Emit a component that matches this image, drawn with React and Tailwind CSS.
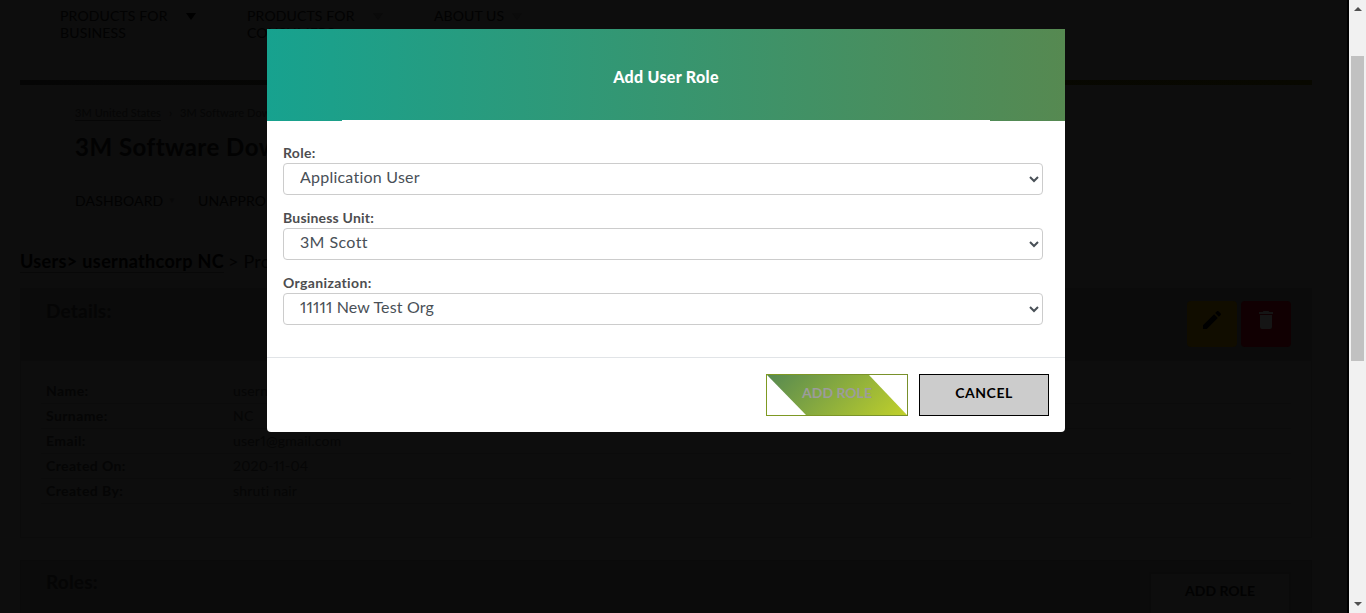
import React from 'react';

const details = [
  ['Name:', 'usernathcorp'],
  ['Surname:', 'NC'],
  ['Email:', 'user1@gmail.com'],
  ['Created On:', '2020-11-04'],
  ['Created By:', 'shruti nair'],
];

function NavItem({ children, className, arrow }) {
  return (
    <div className={`flex shrink-0 items-start ${className}`}>
      <span className="w-[122px] text-[14px] leading-[17px] tracking-[0.15px]">{children}</span>
      <span className={`mt-[6px] h-0 w-0 border-x-[5px] border-t-[7px] border-x-transparent ${arrow}`} />
    </div>
  );
}

function Page() {
  return (
    <div className="flex h-full min-w-0 flex-1 flex-col overflow-hidden border-r-2 border-black bg-[#0d0d0d] pl-5 text-[#020202]">
      <nav className="flex h-[80px] shrink-0 pl-10 pt-[7px]">
        <NavItem className="w-[187px]" arrow="ml-[4px] border-t-[#000]">PRODUCTS FOR BUSINESS</NavItem>
        <NavItem className="w-[187px]" arrow="ml-[4px] border-t-[#0a0a0a]">PRODUCTS FOR CONSUMERS</NavItem>
        <div className="flex items-start text-[14px] leading-[17px] tracking-[0.1px]">
          ABOUT US
          <span className="ml-2 mt-[6px] h-0 w-0 border-x-[5px] border-t-[7px] border-x-transparent border-t-[#0b0b0b]" />
        </div>
      </nav>
      <div className="h-[5px] w-[1292px] shrink-0 bg-gradient-to-r from-[#050505] to-[#080800]" />
      <div className="mt-[21px] flex h-[15px] shrink-0 gap-2 pl-[55px] text-[11px] leading-[13px] text-[#060606]">
        <span className="h-[15px] w-[86px] whitespace-nowrap border-b border-[#060606] tracking-[0.1px]">3M United States</span>
        <span>›</span>
        <span className="tracking-[0.1px]">3M Software Dow</span>
      </div>
      <h1 className="mt-[11px] h-[30px] shrink-0 pl-[55px] text-[24px] font-bold leading-[30px] tracking-[0.5px]">
        3M Software Dow
      </h1>
      <div className="mt-[28px] flex h-[20px] shrink-0 items-center pl-[55px] text-[14px] tracking-[0.15px]">
        <span className="w-[93px]">DASHBOARD</span>
        <span className="w-[30px] text-[8px] text-[#090909]">▼</span>
        <span>UNAPPRO</span>
      </div>
      <div className="mt-[40px] flex h-[23px] shrink-0 text-[18px] leading-[22px]">
        <span className="h-[23px] border-b border-[#080808] font-bold tracking-[0.35px] text-black">Users&gt; usernathcorp NC</span>
        <span className="ml-1 tracking-[0.2px]">&gt; Pro</span>
      </div>
      <section className="mt-[15px] flex h-[250px] w-[1292px] shrink-0 flex-col border border-[#0b0b0b]">
        <div className="flex h-[72px] shrink-0 justify-between bg-[#0b0b0b] pl-[25px] pr-5 pt-[12px]">
          <h2 className="-mt-px text-[19px] font-bold leading-[22px] tracking-[0.2px] text-[#050505]">Details:</h2>
          <div className="flex gap-1">
            <div className="flex h-[46px] w-[50px] justify-center rounded bg-[#110d00] pt-[7px]">
              <svg viewBox="0 0 24 24" className="h-6 w-6" fill="#000">
                <path d="M3 17.2V21h3.8L17.8 9.9 14.1 6.2zM20.7 7c.4-.4.4-1 0-1.4l-2.3-2.3c-.4-.4-1-.4-1.4 0l-1.8 1.8 3.7 3.7z" />
              </svg>
            </div>
            <div className="flex h-[46px] w-[50px] justify-center rounded bg-[#110002] pt-[7px]">
              <svg viewBox="0 0 24 24" className="h-6 w-6" fill="#151515">
                <path d="M6 19a2 2 0 0 0 2 2h8a2 2 0 0 0 2-2V7H6zM19 4h-3.5l-1-1h-5l-1 1H5v2h14z" />
              </svg>
            </div>
          </div>
        </div>
        <dl className="mx-5 mt-[18px] text-[14px] leading-[24px]">
          {details.map(([label, value]) => (
            <div key={label} className="flex h-[25px] border-b border-[#0b0b0b] pl-[5px]">
              <dt className="w-[187px] font-bold tracking-[0.4px] text-[#050505]">{label}</dt>
              <dd className="proportional-nums tracking-[0.2px] text-[#060606]">{value}</dd>
            </div>
          ))}
        </dl>
      </section>
      <section className="mt-[22px] flex h-[72px] w-[1292px] shrink-0 justify-between border border-[#0a0a0a] bg-[#0b0b0b] pl-[25px] pr-5 pt-[11px]">
        <h2 className="-mt-px text-[19px] font-bold leading-[22px] tracking-[0.2px] text-[#050505]">Roles:</h2>
        <div className="h-[50px] w-[142px] border-2 border-[#0a0a0a] bg-[#0d0d0d] pt-[6px] text-center text-[14px] font-bold leading-[22px]">
          ADD ROLE
        </div>
      </section>
    </div>
  );
}

function Field({ label, value, labelTracking, tracking }) {
  return (
    <label className="mb-4 flex h-[49px] flex-col">
      <span className={`h-[17px] text-[14px] font-bold leading-[14px] text-[#4d4d4f] ${labelTracking}`}>{label}</span>
      <select
        className={`h-8 w-[760px] rounded border border-[#ccc] bg-white pb-[6px] pl-3 pr-px pt-0 text-[16px] proportional-nums text-[#495057] ${tracking}`}
      >
        <option>{value}</option>
      </select>
    </label>
  );
}

function Dialog() {
  return (
    <div className="absolute left-[267px] top-[29px] flex h-[403px] w-[798px] flex-col rounded-b bg-white">
      <header className="flex h-[92px] shrink-0 flex-col items-center bg-[linear-gradient(90deg,#17a28f,#568951)]">
        <h2 className="h-[91px] pt-[38px] text-[16px] font-black leading-5 tracking-[0.3px] text-white">Add User Role</h2>
        <div className="h-px w-[648px] bg-white" />
      </header>
      <div className="flex h-[236px] shrink-0 flex-col pl-4 pt-[25px]">
        <Field label="Role:" value="Application User" labelTracking="tracking-[0.3px]" tracking="tracking-[0.23px]" />
        <Field label="Business Unit:" value="3M Scott" labelTracking="tracking-[0.2px]" tracking="tracking-[0.4px]" />
        <Field label="Organization:" value="11111 New Test Org" labelTracking="tracking-[0.35px]" tracking="tracking-[0.15px]" />
      </div>
      <footer className="flex flex-1 justify-end gap-[11px] border-t border-[#e1e4e7] pr-4 pt-4">
        <button className="h-[42px] w-[142px] bg-[linear-gradient(90deg,#7f9a22,#78902c)] p-px text-[14px] font-bold">
          <span className="block h-full bg-white">
            <span className="block h-full bg-[linear-gradient(135deg,#568951,#c1d12a)] pt-[7px] leading-[22px] text-[#9c9c9c] [clip-path:polygon(0_0,102px_0,100%_100%,39px_100%)]">
              ADD ROLE
            </span>
          </span>
        </button>
        <button className="h-[42px] w-[130px] border border-black bg-[#ccc] pb-[5px] text-[14px] font-bold tracking-[0.55px] text-black">
          CANCEL
        </button>
      </footer>
    </div>
  );
}

function Scrollbar() {
  return (
    <div className="flex h-full w-[17px] shrink-0 flex-col items-center bg-[#f1f1f1]">
      <div className="mt-[7px] h-0 w-0 border-x-4 border-b-4 border-x-transparent border-b-[#505050]" />
      <div className="mt-[45px] h-[305px] w-[13px] bg-[#c1c1c1]" />
      <div className="mb-[7px] mt-auto h-0 w-0 border-x-4 border-t-4 border-x-transparent border-t-[#505050]" />
    </div>
  );
}

export default function App() {
  return (
    <div className="relative flex h-[613px] w-[1366px] overflow-hidden font-['Lato',sans-serif]">
      <Page />
      <Scrollbar />
      <Dialog />
    </div>
  );
}
